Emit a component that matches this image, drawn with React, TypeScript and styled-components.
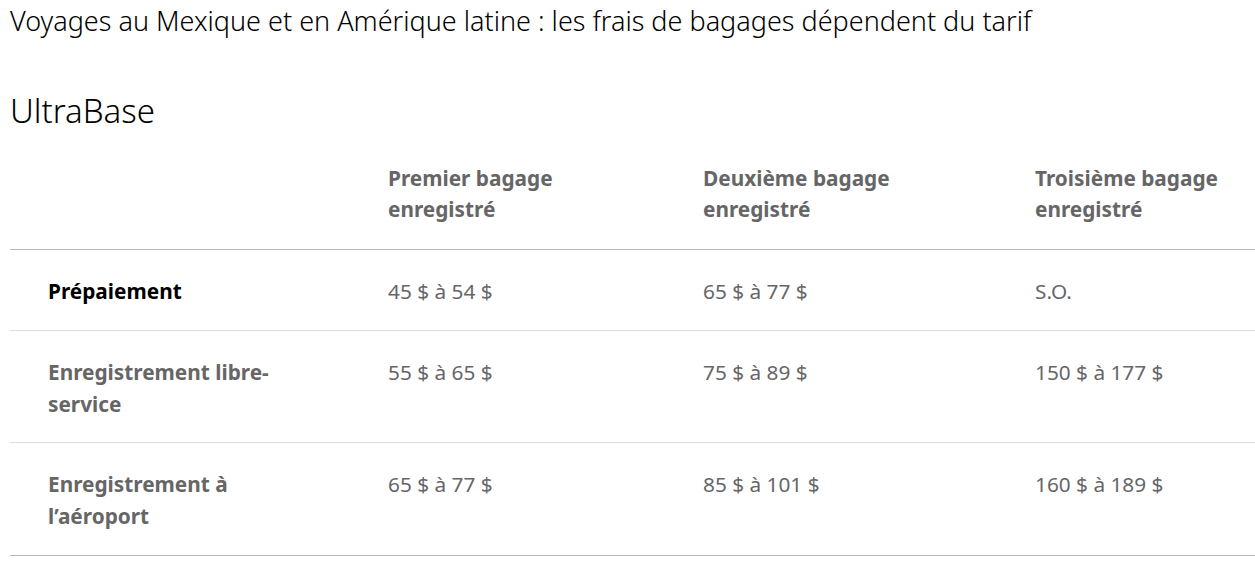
import React from "react";
import styled, { createGlobalStyle } from "styled-components";

const Global = createGlobalStyle`
  html, body { margin: 0; padding: 0; background: #fff; }
  body { font-family: "Noto Sans", "Open Sans", sans-serif; }
`;

const Page = styled.div`
  padding: 0 0 0 10px;
  width: 1245px;
`;

const Title = styled.h2`
  margin: 0;
  padding-top: 3px;
  font-size: 27px;
  line-height: 36px;
  font-weight: 300;
  color: #000;
`;

const SubTitle = styled.h3`
  margin: 50px 0 0;
  font-size: 33px;
  line-height: 44px;
  font-weight: 300;
  color: #000;
`;

const Table = styled.div`
  margin-top: 6px;
  display: grid;
  grid-template-columns: 378px 315px 332px 1fr;
`;

const Row = styled.div<{ $border: "dark" | "light" }>`
  display: contents;
  & > * {
    border-bottom: 1px solid ${(p) => (p.$border === "dark" ? "#b8b8b8" : "#dedede")};
  }
`;

const Cell = styled.div<{ $head?: boolean; $first?: boolean; $dark?: boolean }>`
  padding: ${(p) => (p.$head ? "24px" : "25px")} 10px ${(p) => (p.$head ? "24px" : "22.5px")}
    ${(p) => (p.$first ? "38px" : "0")};
  font-size: 20.8px;
  line-height: ${(p) => (p.$head ? "31px" : "32px")};
  font-weight: ${(p) => (p.$head || p.$first ? 700 : 400)};
  color: ${(p) => (p.$dark ? "#000" : "#666")};
`;

const rows = [
  { label: "Prépaiement", dark: true, vals: ["45 $ à 54 $", "65 $ à 77 $", "S.O."] },
  { label: "Enregistrement libre-service", vals: ["55 $ à 65 $", "75 $ à 89 $", "150 $ à 177 $"] },
  { label: "Enregistrement à l’aéroport", vals: ["65 $ à 77 $", "85 $ à 101 $", "160 $ à 189 $"] },
];

export default function App() {
  return (
    <Page>
      <Global />
      <Title>Voyages au Mexique et en Amérique latine : les frais de bagages dépendent du tarif</Title>
      <SubTitle>UltraBase</SubTitle>
      <Table>
        <Row $border="dark">
          <Cell $head />
          <Cell $head>Premier bagage<br />enregistré</Cell>
          <Cell $head>Deuxième bagage<br />enregistré</Cell>
          <Cell $head>Troisième bagage<br />enregistré</Cell>
        </Row>
        {rows.map((r, i) => (
          <Row key={r.label} $border={i === rows.length - 1 ? "dark" : "light"}>
            <Cell $first $dark={r.dark}>
              {r.label === "Enregistrement libre-service" ? (
                <>Enregistrement libre-<br />service</>
              ) : r.label === "Enregistrement à l’aéroport" ? (
                <>Enregistrement à<br />l’aéroport</>
              ) : (
                r.label
              )}
            </Cell>
            {r.vals.map((v, j) => (
              <Cell key={j}>{v}</Cell>
            ))}
          </Row>
        ))}
      </Table>
    </Page>
  );
}
